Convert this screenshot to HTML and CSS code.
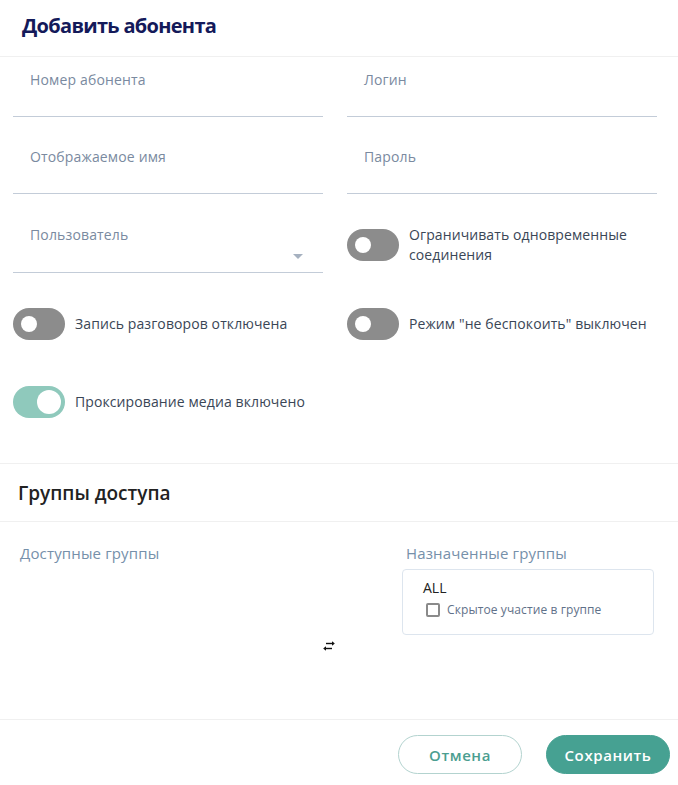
FILE: index.html
```html
<!DOCTYPE html>
<html lang="ru">
<head>
<meta charset="utf-8">
<title>Добавить абонента</title>
<link rel="stylesheet" href="styles.css">
</head>
<body>
<div class="dialog">
  <header class="dlg-header">
    <h1 class="dlg-title">Добавить абонента</h1>
  </header>

  <div class="form">
    <div class="row row-1">
      <div class="field"><div class="field-label">Номер абонента</div><div class="field-input"></div></div>
      <div class="field"><div class="field-label">Логин</div><div class="field-input"></div></div>
    </div>
    <div class="row row-2">
      <div class="field"><div class="field-label">Отображаемое имя</div><div class="field-input"></div></div>
      <div class="field"><div class="field-label">Пароль</div><div class="field-input"></div></div>
    </div>
    <div class="row row-3">
      <div class="field select"><div class="field-label">Пользователь</div><div class="field-input"><span class="caret"></span></div></div>
      <label class="switch-row">
        <span class="switch"><span class="knob"></span></span>
        <span class="switch-text">Ограничивать одновременные соединения</span>
      </label>
    </div>
    <div class="row row-4">
      <label class="switch-row">
        <span class="switch"><span class="knob"></span></span>
        <span class="switch-text">Запись разговоров отключена</span>
      </label>
      <label class="switch-row">
        <span class="switch"><span class="knob"></span></span>
        <span class="switch-text">Режим "не беспокоить" выключен</span>
      </label>
    </div>
    <div class="row row-5">
      <label class="switch-row">
        <span class="switch on"><span class="knob"></span></span>
        <span class="switch-text">Проксирование медиа включено</span>
      </label>
    </div>
  </div>

  <section class="groups">
    <h2 class="groups-title">Группы доступа</h2>
    <div class="groups-body">
      <div class="groups-col available">
        <div class="groups-label">Доступные группы</div>
      </div>
      <div class="groups-mid">
        <svg class="swap" width="14" height="12" viewBox="0 0 14 12">
          <path d="M4 3.5H11.5" stroke="#111" stroke-width="1.4" fill="none"/>
          <path d="M10 1.2L12.8 3.5L10 5.8Z" fill="#111"/>
          <path d="M10 8.5H2.5" stroke="#111" stroke-width="1.4" fill="none"/>
          <path d="M4 6.2L1.2 8.5L4 10.8Z" fill="#111"/>
        </svg>
      </div>
      <div class="groups-col assigned">
        <div class="groups-label assigned-label">Назначенные группы</div>
        <div class="group-box">
          <div class="group-name">ALL</div>
          <label class="hidden-row"><span class="checkbox"></span><span class="hidden-text">Скрытое участие в группе</span></label>
        </div>
      </div>
    </div>
  </section>

  <footer class="dlg-footer">
    <button class="btn btn-outline">Отмена</button>
    <button class="btn btn-primary">Сохранить</button>
  </footer>
</div>
</body>
</html>
```

FILE: styles.css
```css
* { box-sizing: border-box; }
html, body { margin: 0; padding: 0; background: #fff; }
body {
  font-family: "Open Sans", "Noto Sans", "Liberation Sans", sans-serif;
  width: 678px;
  height: 785px;
  overflow: hidden;
}
.dialog { width: 678px; height: 785px; display: flex; flex-direction: column; }

.dlg-header {
  height: 57px;
  border-bottom: 1px solid #f0f0f0;
  padding: 12px 22px 0;
}
.dlg-title {
  margin: 0;
  font-size: 20px;
  line-height: 28px;
  font-weight: 700;
  letter-spacing: -0.7px;
  color: #141a5a;
}

.form { padding: 0 21px 0 13px; height: 406px; }
.row {
  display: grid;
  grid-template-columns: 310px 310px;
  column-gap: 24px;
  align-items: start;
}
.row-1 { margin-top: 13px; }
.row-2 { margin-top: 30px; }
.row-3 { margin-top: 31px; }
.row-4 { margin-top: 35px; }
.row-5 { margin-top: 46px; }

.field-label {
  padding-left: 17px;
  font-size: 14px;
  line-height: 20px;
  letter-spacing: 0.15px;
  color: #7a8aa0;
}
.field-input {
  height: 27px;
  border-bottom: 1px solid #c3ccd8;
  position: relative;
}
.select .field-input { height: 28px; }
.caret {
  position: absolute;
  right: 20px;
  top: 9px;
  width: 0; height: 0;
  border-left: 5px solid transparent;
  border-right: 5px solid transparent;
  border-top: 5px solid #a6b1c0;
}

.switch-row { display: flex; align-items: center; gap: 10px; }
.switch {
  flex: none;
  width: 52px;
  height: 32px;
  border-radius: 16px;
  background: #8c8c8c;
  position: relative;
}
.knob {
  position: absolute;
  left: 8px;
  top: 8px;
  width: 16px;
  height: 16px;
  border-radius: 50%;
  background: #fff;
}
.switch.on { background: #8fc9bc; }
.switch.on .knob { left: 24px; top: 4px; width: 24px; height: 24px; }
.switch-text {
  font-size: 14px;
  line-height: 20px;
  letter-spacing: 0.1px;
  color: #3a4656;
}

.groups { border-top: 1px solid #f0f0f0; flex: 1; display: flex; flex-direction: column; }
.groups-title {
  margin: 0;
  height: 58px;
  padding: 16px 18px 0;
  font-size: 19px;
  line-height: 26px;
  font-weight: 600;
  color: #222;
  border-bottom: 1px solid #f0f0f0;
}
.groups-body {
  flex: 1;
  display: grid;
  grid-template-columns: 302px 80px 276px;
  padding: 21px 0 0 20px;
}
.groups-label {
  font-size: 15px;
  line-height: 20px;
  letter-spacing: 0.15px;
  color: #7690aa;
}
.groups-mid { display: flex; justify-content: flex-start; padding-top: 97px; }
.swap { display: block; }
.assigned-label { padding-left: 4px; }
.group-box {
  margin-top: 6px;
  width: 252px;
  height: 66px;
  border: 1px solid #dde5ee;
  border-radius: 4px;
  padding: 8px 0 0 20px;
}
.group-name { font-size: 14px; line-height: 20px; color: #222; }
.hidden-row { display: flex; align-items: center; gap: 7px; margin-top: 3px; padding-left: 3px; }
.checkbox {
  width: 14px; height: 14px;
  border: 2px solid #8a8a8a;
  border-radius: 2px;
}
.hidden-text { font-size: 12px; line-height: 18px; letter-spacing: 0.1px; color: #5f7189; }

.dlg-footer {
  height: 66px;
  border-top: 1px solid #f0f0f0;
  display: flex;
  justify-content: flex-end;
  align-items: flex-start;
  gap: 24px;
  padding: 15px 8px 0 0;
}
.btn {
  width: 124px;
  height: 39px;
  border-radius: 20px;
  font-family: "Open Sans", "Noto Sans", sans-serif;
  font-size: 15px;
  font-weight: 600;
  letter-spacing: 0.6px;
  cursor: pointer;
}
.btn-outline { background: #fff; border: 1px solid #b3d3cf; color: #4b9e90; }
.btn-primary { background: #46a192; border: 1px solid #46a192; color: #fff; }
```
